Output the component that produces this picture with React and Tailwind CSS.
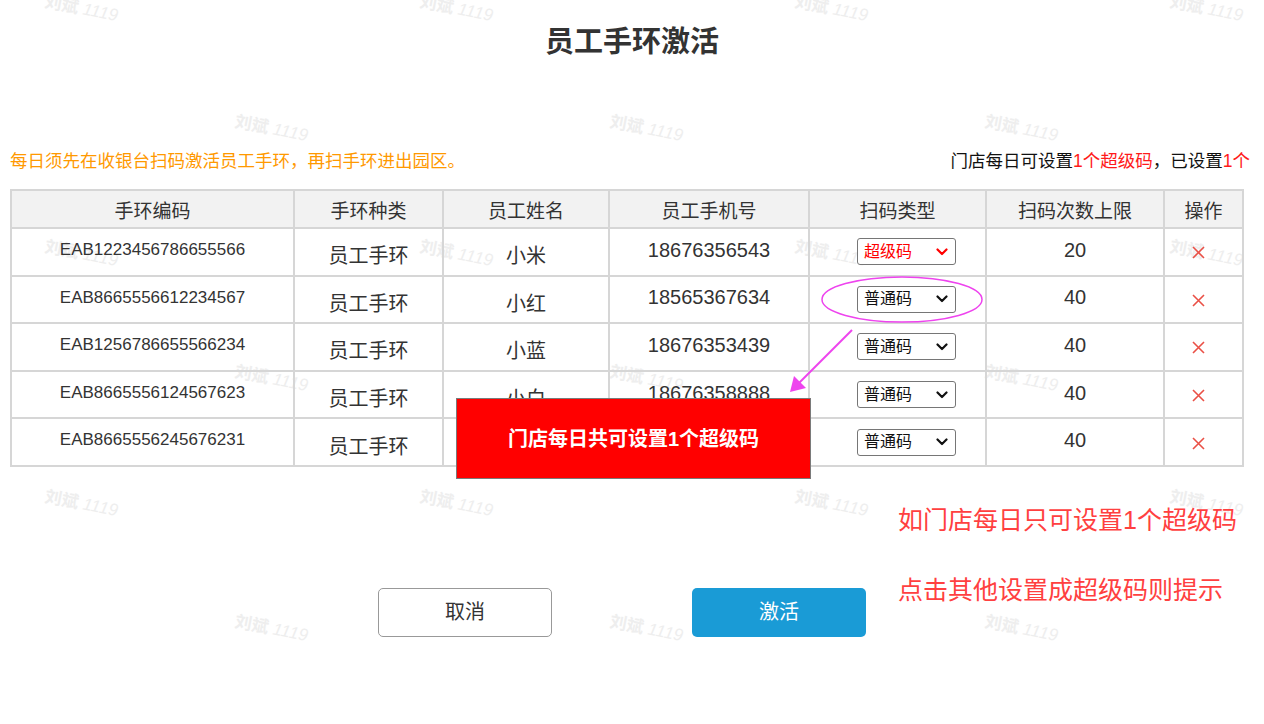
import React from "react";

const rows = [
  { code: "EAB1223456786655566", name: "小米", phone: "18676356543", type: "超级码", limit: "20" },
  { code: "EAB8665556612234567", name: "小红", phone: "18565367634", type: "普通码", limit: "40" },
  { code: "EAB1256786655566234", name: "小蓝", phone: "18676353439", type: "普通码", limit: "40" },
  { code: "EAB8665556124567623", name: "小白", phone: "18676358888", type: "普通码", limit: "40" },
  { code: "EAB8665556245676231", name: "小黑", phone: "18676358888", type: "普通码", limit: "40" },
];

const marks = [
  [45, -8], [420, -8], [795, -8], [1170, -8],
  [235, 112], [610, 112], [985, 112],
  [45, 237], [420, 237], [795, 237], [1170, 237],
  [235, 362], [610, 362], [985, 362],
  [45, 487], [420, 487], [795, 487], [1170, 487],
  [235, 612], [610, 612], [985, 612],
];

function Chevron({ red }) {
  return (
    <svg width="12" height="8" viewBox="0 0 12 8" className="shrink-0">
      <path d="M1.5 1.5 L6 6 L10.5 1.5" fill="none" stroke={red ? "#ff0000" : "#111"} strokeWidth="2.2" strokeLinecap="round" strokeLinejoin="round" />
    </svg>
  );
}

function Sel({ value }) {
  const red = value === "超级码";
  return (
    <div className="ml-[47px] w-[99px] h-[27px] border border-[#767676] rounded-[3px] bg-white flex items-center justify-between pl-[6px] pr-[7px]">
      <span className={"text-[16px] leading-none " + (red ? "text-[#ff0000]" : "text-[#111]")}>{value}</span>
      <Chevron red={red} />
    </div>
  );
}

export default function App() {
  return (
    <div className="relative w-[1264px] h-[724px] bg-white overflow-hidden font-['Liberation_Sans','Noto_Sans_CJK_SC',sans-serif] text-[#333]">
      {/* watermarks */}
      <div className="absolute inset-0 pointer-events-none">
        {marks.map(([x, y], i) => (
          <div
            key={i}
            className="absolute rotate-[11deg] origin-left whitespace-nowrap text-[#eeeeee] text-[17px] leading-[20px]"
            style={{ left: x, top: y }}
          >
            <span className="font-bold">刘斌</span> <span className="italic">1119</span>
          </div>
        ))}
      </div>

      <div className="relative">
        <h1 className="pt-[24px] text-center text-[29px] leading-[36px] font-bold text-[#333]">员工手环激活</h1>

        <div className="mt-[91px] flex items-center justify-between pl-[10px] pr-[14px] text-[17.5px] leading-[20px]">
          <span className="text-[#ff9900]">每日须先在收银台扫码激活员工手环，再扫手环进出园区。</span>
          <span className="text-[#111]">
            门店每日可设置<span className="text-[#ff1a1a]">1个超级码</span>，已设置<span className="text-[#ff1a1a]">1个</span>
          </span>
        </div>

        <table className="mt-[18px] ml-[10px] w-[1232px] border-collapse table-fixed text-center">
          <colgroup>
            <col className="w-[283px]" />
            <col className="w-[149px]" />
            <col className="w-[166px]" />
            <col className="w-[200px]" />
            <col className="w-[177px]" />
            <col className="w-[178px]" />
            <col className="w-[79px]" />
          </colgroup>
          <thead>
            <tr className="h-[38px] bg-[#f2f2f2] text-[19px]">
              {["手环编码", "手环种类", "员工姓名", "员工手机号", "扫码类型", "扫码次数上限", "操作"].map((h) => (
                <th key={h} className="border-2 border-[#d6d6d6] font-normal p-0 pt-[6px] align-middle">{h}</th>
              ))}
            </tr>
          </thead>
          <tbody>
            {rows.map((r, i) => (
              <tr key={i} className="h-[47.6px]">
                <td className="border-2 border-[#d6d6d6] p-0 pb-[4px] align-middle text-[17px]">{r.code}</td>
                <td className="border-2 border-[#d6d6d6] p-0 pt-[9px] align-middle text-[20px]">员工手环</td>
                <td className="border-2 border-[#d6d6d6] p-0 pt-[9px] align-middle text-[20px]">{r.name}</td>
                <td className="border-2 border-[#d6d6d6] p-0 pb-[4px] align-middle text-[20px]">{r.phone}</td>
                <td className="border-2 border-[#d6d6d6] p-0 align-middle"><Sel value={r.type} /></td>
                <td className="border-2 border-[#d6d6d6] p-0 pb-[4px] align-middle text-[20px]">{r.limit}</td>
                <td className="border-2 border-[#d6d6d6] p-0 pt-[2px] align-middle">
                  <svg width="13" height="13" viewBox="0 0 13 13" className="ml-[27px]">
                    <path d="M1 1 L12 12 M12 1 L1 12" stroke="#ea5046" strokeWidth="1.6" />
                  </svg>
                </td>
              </tr>
            ))}
          </tbody>
        </table>

        <div className="mt-[121px] flex pl-[378px] gap-[140px]">
          <button className="w-[174px] h-[49px] rounded-[5px] border border-[#999] bg-white text-[20px] text-[#333]">取消</button>
          <button className="w-[174px] h-[49px] rounded-[5px] bg-[#1a9bd6] text-[20px] text-white">激活</button>
        </div>
      </div>

      {/* annotation overlays */}
      <svg className="absolute inset-0 pointer-events-none" width="1264" height="724">
        <ellipse cx="902" cy="299.5" rx="80" ry="22.5" fill="none" stroke="#ee44ee" strokeWidth="1.5" />
        <line x1="852" y1="330" x2="798" y2="384" stroke="#ee44ee" strokeWidth="2" />
        <polygon points="790,392 794,376 806,388" fill="#ee44ee" />
      </svg>

      <div className="absolute left-[456px] top-[398px] w-[355px] h-[81px] bg-[#ff0000] border border-[#7a7a7a] flex items-center justify-center">
        <span className="text-white font-bold text-[20px]">门店每日共可设置1个超级码</span>
      </div>

      <div className="absolute left-[898px] top-[505px] text-[#ff4040] text-[25px] leading-[30px]">
        <div>如门店每日只可设置1个超级码</div>
        <div className="mt-[40px]">点击其他设置成超级码则提示</div>
      </div>
    </div>
  );
}
